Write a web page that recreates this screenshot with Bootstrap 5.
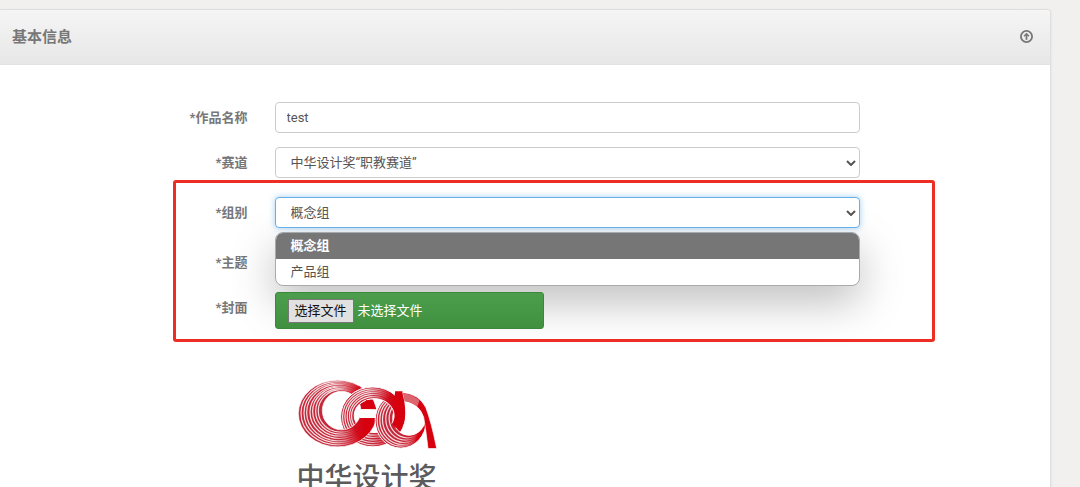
<!DOCTYPE html>
<html lang="zh-CN">
<head>
<meta charset="utf-8">
<meta name="viewport" content="width=device-width, initial-scale=1">
<title>基本信息</title>
<link href="https://cdn.jsdelivr.net/npm/bootstrap@5.3.0/dist/css/bootstrap.min.css" rel="stylesheet">
<style>
body { background: #f1f0ee; font-family: Roboto, "Noto Sans CJK SC", sans-serif; font-size: 13px; color: #555; }
.page-wrap { padding: 9px 29px 0 0; }
.panel-box { border: 1px solid #dfdfdf; border-left: 0; border-radius: 0 4px 4px 0; box-shadow: 0 1px 3px rgba(0,0,0,.08); }
.panel-head { height: 55px; padding: 0 17px 1px 12px; background: linear-gradient(#f5f5f5, #e7e7e7); border-bottom: 1px solid #e2e2e2; border-radius: 0 4px 0 0; color: #777; }
.panel-head h1 { font-size: 15px; font-weight: 700; }
.panel-main { padding: 37px 0 40px; }
.line { display: flex; min-height: 31px; }
.line-label { width: 25%; padding-right: 15px; line-height: 31px; text-align: right; font-weight: 700; color: #777; }
.line-field { width: 58%; padding: 0 12px; position: relative; }
.field { height: 31px; padding: 0 11px; font-size: 13px; color: #555; border: 1px solid #ccc; border-radius: 4px; box-shadow: none; }
.form-select.field { padding-left: 15px; background: #fff url("data:image/svg+xml,%3Csvg xmlns='http://www.w3.org/2000/svg' viewBox='0 0 10 6'%3E%3Cpath d='M1 1l4 4 4-4' fill='none' stroke='%23555' stroke-width='2'/%3E%3C/svg%3E") no-repeat right 3px center / 10px 6px; }
.form-select.field-active { position: relative; z-index: 6; border-color: #66afe9; box-shadow: 0 0 6px rgba(102,175,233,.6); }
.gap-s { margin-top: 14px; }
.gap-l { margin-top: 19px; }
.marked { position: relative; }
.mark-frame { position: absolute; inset: -17px 11% -13px 16.5%; border: 3px solid #ee2d24; border-radius: 3px; pointer-events: none; z-index: 6; }
.options { position: absolute; top: 35px; left: 12px; right: 12px; z-index: 5; margin: 0; padding: 0; list-style: none; background: #fff; border: 1px solid #aaa; border-radius: 8px; overflow: hidden; box-shadow: 0 16px 44px rgba(0,0,0,.26); }
.options li { padding-left: 15px; line-height: 26px; }
.options .chosen { background: #767676; color: #fff; font-weight: 700; }
.upload { position: relative; z-index: 7; width: 46%; height: 37px; padding: 0 12px; background: linear-gradient(#4c9e4c, #409040); border: 1px solid #3b873b; border-radius: 3px; color: #fff; font-size: 13px; cursor: pointer; }
.upload-pick { padding: 0 6px; line-height: 22px; background: #e1e1e1; border: 1px solid #777; color: #111; }
.cover { width: 141px; margin: 49px 0 0 22px; }
.cover svg { display: block; width: 100%; }
.cover figcaption { margin-top: 12px; font-size: 28px; line-height: 36px; font-weight: 500; color: #5b5b5d; white-space: nowrap; }
</style>
</head>
<body>
<main class="page-wrap">
<section class="card panel-box">
  <header class="panel-head d-flex align-items-center justify-content-between">
    <h1 class="m-0">基本信息</h1>
    <button type="button" class="btn p-0 border-0 d-flex" aria-label="收起">
      <svg width="13" height="13" viewBox="0 0 13 13" fill="none" stroke="#777"><circle cx="6.5" cy="6.5" r="5.6" stroke-width="1.8"/><path d="M6.500 9.800V4" stroke-width="1.8"/><path d="M4 6.300L6.500 3.800L9 6.300" stroke-width="1.500"/></svg>
    </button>
  </header>
  <form class="panel-main">
    <div class="line">
      <label class="line-label" for="work">*作品名称</label>
      <div class="line-field"><input id="work" type="text" class="form-control field" value="test"></div>
    </div>
    <div class="line gap-s">
      <label class="line-label" for="track">*赛道</label>
      <div class="line-field"><select id="track" class="form-select field"><option>中华设计奖“职教赛道”</option></select></div>
    </div>
    <div class="marked gap-l">
      <div class="line">
        <label class="line-label" for="group">*组别</label>
        <div class="line-field">
          <select id="group" class="form-select field field-active"><option>概念组</option><option>产品组</option></select>
          <ul class="options" role="listbox" aria-label="组别">
            <li class="chosen" role="option" aria-selected="true">概念组</li>
            <li role="option" aria-selected="false">产品组</li>
          </ul>
        </div>
      </div>
      <div class="line gap-l">
        <label class="line-label" for="theme">*主题</label>
        <div class="line-field"><select id="theme" class="form-select field"></select></div>
      </div>
      <div class="line gap-s">
        <label class="line-label" for="cover">*封面</label>
        <div class="line-field">
          <label class="upload d-flex align-items-center gap-1" for="cover">
            <input id="cover" type="file" class="visually-hidden">
            <span class="upload-pick">选择文件</span><span>未选择文件</span>
          </label>
        </div>
      </div>
      <div class="mark-frame"></div>
    </div>
    <div class="line">
      <div class="line-label"></div>
      <div class="line-field">
        <figure class="cover">
          <svg viewBox="50 40 424 215" role="img" aria-label="CDA">
            <defs>
              <linearGradient id="g1" x1="0" y1="0" x2="1" y2="0"><stop offset=".5" stop-color="#c5283a"/><stop offset=".85" stop-color="#d6000f"/></linearGradient>
              <clipPath id="c1"><path d="M40 30H258L290 134H238V160H300V260H40Z"/></clipPath>
              <clipPath id="low"><path d="M150 160H310V260H150Z"/></clipPath>
              <clipPath id="c2"><path d="M170 50H390V190H345L290 122L258 105L240 160H170Z"/></clipPath>
              <linearGradient id="fade" x1="0" y1="0" x2="1" y2="0"><stop offset=".4" stop-color="#fff" stop-opacity=".85"/><stop offset=".8" stop-color="#fff" stop-opacity="0"/></linearGradient>
              <g id="bigc">
                <path fill-rule="evenodd" fill="url(#g1)" stroke="#fff" stroke-width="2" d="M54 147a118 100 0 1 0 236 0a118 100 0 1 0-236 0M126 138a58 58 0 1 0 116 0a58 58 0 1 0-116 0"/>
                <g fill="none" stroke="url(#fade)" stroke-width="3.600">
                  <ellipse cx="173" cy="146" rx="111" ry="95"/><ellipse cx="175" cy="145" rx="104" ry="90"/><ellipse cx="176" cy="144" rx="97" ry="85"/><ellipse cx="178" cy="143" rx="89" ry="79"/><ellipse cx="179" cy="141" rx="82" ry="74"/><ellipse cx="181" cy="140" rx="75" ry="69"/><ellipse cx="182" cy="139" rx="68" ry="64"/>
                </g>
              </g>
              <g id="midc">
                <path fill-rule="evenodd" fill="url(#g1)" stroke="#fff" stroke-width="3" d="M181 157a97 90 0 1 0 194 0a97 90 0 1 0-194 0M222 153a60 51 0 1 0 120 0a60 51 0 1 0-120 0"/>
                <g fill="none" stroke="url(#fade)" stroke-width="3.600">
                  <ellipse cx="278" cy="157" rx="91" ry="84"/><ellipse cx="279" cy="156" rx="85" ry="78"/><ellipse cx="280" cy="155" rx="79" ry="72"/><ellipse cx="281" cy="154" rx="73" ry="65"/><ellipse cx="281" cy="154" rx="67" ry="58"/>
                </g>
              </g>
            </defs>
            <g clip-path="url(#c1)"><use href="#bigc"/></g>
            <use href="#midc"/>
            <path d="M256 106Q276 108 288 134H268Q266 119 256 106Z" fill="#d6000f"/>
            <path d="M239 134H286V160H239Z" fill="#fff"/>
            <g clip-path="url(#low)"><use href="#bigc"/></g>
            <path fill-rule="evenodd" fill="url(#g1)" stroke="#fff" stroke-width="3" d="M285 168a77 83 0 1 0 154 0a77 83 0 1 0-154 0M338 160a49 52 0 1 0 98 0a49 52 0 1 0-98 0"/>
            <g fill="none" stroke="url(#fade)" stroke-width="3.600">
              <ellipse cx="364" cy="167" rx="73" ry="78"/><ellipse cx="368" cy="166" rx="69" ry="74"/><ellipse cx="372" cy="165" rx="65" ry="69"/><ellipse cx="377" cy="163" rx="60" ry="64"/><ellipse cx="382" cy="162" rx="55" ry="58"/>
            </g>
            <g clip-path="url(#c2)"><use href="#midc"/></g>
            <path d="M345 80H367Q379 130 374 166Q370 184 356 194L343 180Q350 158 343 120Z" fill="#d6000f"/>
            <path d="M368 84Q416 88 437 128Q454 172 470 252H444Q438 198 431 158Q418 118 374 110Z" fill="#d6000f" stroke="#fff" stroke-width="2"/>
            <path d="M370 86Q400 90 418 108L412 126Q396 112 374 110Z" fill="#dc6670"/>
          </svg>
          <figcaption>中华设计奖</figcaption>
        </figure>
      </div>
    </div>
  </form>
</section>
</main>
<script src="https://cdn.jsdelivr.net/npm/bootstrap@5.3.0/dist/js/bootstrap.bundle.min.js"></script>
</body>
</html>
